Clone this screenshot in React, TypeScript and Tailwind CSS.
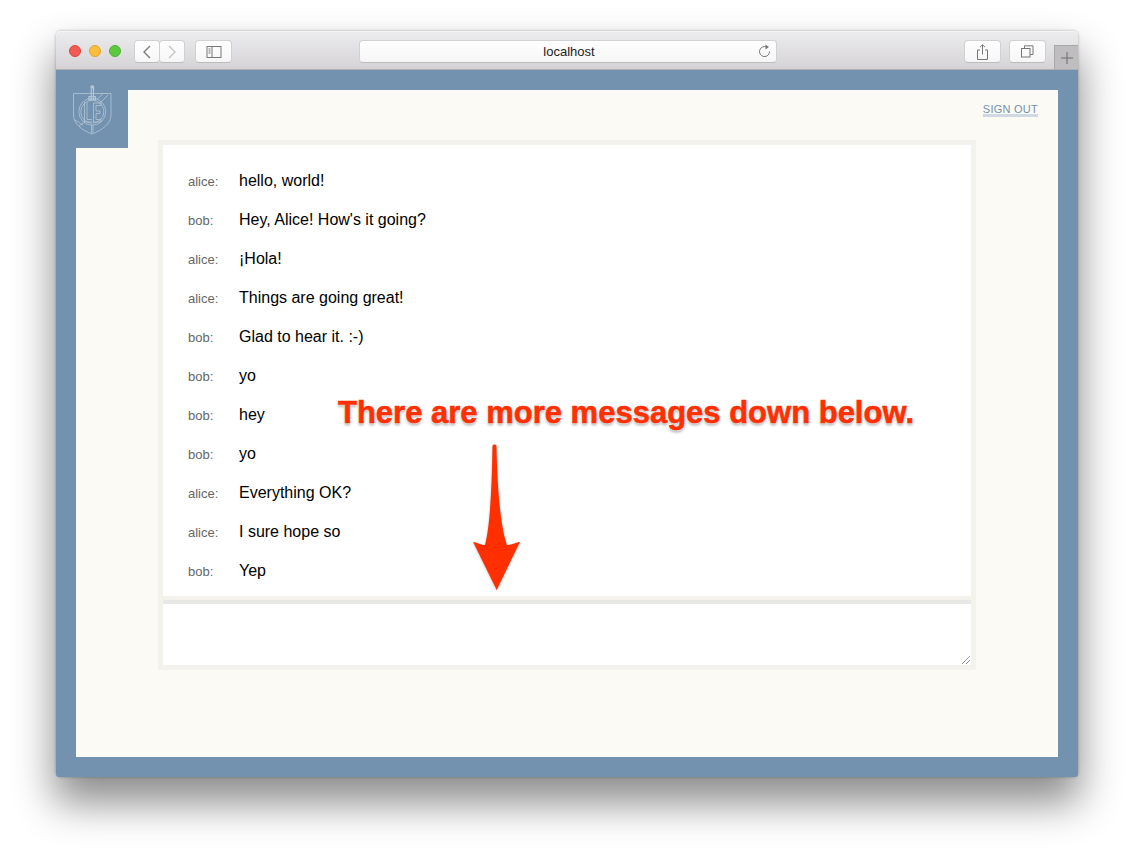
import React from 'react';

const font = { sans: 'font-["Liberation_Sans",Arial,sans-serif]' };

const messages: [string, string][] = [
  ['alice', 'hello, world!'],
  ['bob', "Hey, Alice! How's it going?"],
  ['alice', '¡Hola!'],
  ['alice', 'Things are going great!'],
  ['bob', 'Glad to hear it. :-)'],
  ['bob', 'yo'],
  ['bob', 'hey'],
  ['bob', 'yo'],
  ['alice', 'Everything OK?'],
  ['alice', 'I sure hope so'],
  ['bob', 'Yep'],
];

const toolBtn =
  'h-[23px] bg-gradient-to-b from-white to-[#f6f6f6] border border-[#d2d1d2] border-b-[#bdbcbd] rounded-[4px] flex items-center justify-center';

const Logo = () => (
  <svg width="40" height="50" viewBox="0 0 40 50" fill="none" stroke="#b4c5d6" strokeWidth="0.8">
    <path d="M1.5 8.5H39V30C39 39 30 45 20 49C10 45 1.5 39 1.5 30Z" />
    <circle cx="20.3" cy="26.7" r="13.5" />
    <circle cx="20.3" cy="26.7" r="11.5" />
    <path d="M19.3 1V15M21.5 1V15M17 11.5H23.5V15H17Z" strokeWidth="1.2" />
    <circle cx="20.3" cy="2" r="1.4" fill="#b4c5d6" />
    <path d="M28 18L36 10M25 14.5L31 8.5M3 35L11 40M7 41L13 37M19.5 40V48M21 40V48" />
    <path d="M12.5 17V37H20M15 17V34.5H20" />
    <path d="M21.5 18H29V20.5H24V26H28V28.5H24V34.5H29V37H21.5Z" />
  </svg>
);

const ArrowAnnotation = () => (
  <svg width="50" height="150" viewBox="0 0 50 150" className="drop-shadow-[0_1px_1px_rgba(0,0,0,0.25)]">
    <path
      d="M20.5 3C21 1 24 1 24.5 3C25 30 27 80 35 102C38 102 43 100 48 98.7L24.7 147L1 98.7C6 100 10 102 13 102C19 80 20 30 20.5 3Z"
      fill="#ff2f00"
    />
  </svg>
);

export default function App() {
  return (
    <div className={`w-[1134px] h-[857px] bg-white overflow-hidden pl-[56px] pt-[31px] ${font.sans}`}>
      <div className="relative w-[1022px] h-[746px] flex flex-col rounded-[5px] shadow-[0_24px_40px_2px_rgba(0,0,0,0.45),0_0_3px_rgba(0,0,0,0.3)]">
        {/* safari toolbar */}
        <div className="h-[39px] shrink-0 flex rounded-t-[5px] bg-gradient-to-b from-[#ecebed] to-[#d5d3d6] border-t border-[#f5f5f5] border-b border-b-[#b1b0b1] pl-[13px]">
          <div className="flex items-center gap-2 h-[38px]">
            <span className="w-3 h-3 rounded-full bg-[#f25a55] border border-[#e0443e]" />
            <span className="w-3 h-3 rounded-full bg-[#fbbd3a] border border-[#e1a52e]" />
            <span className="w-3 h-3 rounded-full bg-[#5ec83f] border border-[#4fb233]" />
          </div>
          <div className="flex items-center h-[39px] ml-[13px]">
            <div className={`${toolBtn} w-[26px]`}>
              <svg width="10" height="14" viewBox="0 0 10 14" fill="none" stroke="#7b7b7b" strokeWidth="1.4">
                <path d="M8 1L2 7L8 13" />
              </svg>
            </div>
            <div className={`${toolBtn} w-[26px] -ml-px`}>
              <svg width="10" height="14" viewBox="0 0 10 14" fill="none" stroke="#c4c4c4" strokeWidth="1.4">
                <path d="M2 1L8 7L2 13" />
              </svg>
            </div>
            <div className={`${toolBtn} w-[37px] ml-[10px]`}>
              <svg width="16" height="12" viewBox="0 0 16 12" fill="none" stroke="#777">
                <rect x="1" y="0.5" width="14" height="11" />
                <path d="M6 0.5V11.5M2.5 3H4.5M2.5 5H4.5M2.5 7H4.5" />
              </svg>
            </div>
          </div>
          <div className="flex items-center h-[39px] ml-[127px]">
            <div className={`${toolBtn} w-[418px] relative text-[13px] text-[#222]`}>
              <span className="pl-[2px]">localhost</span>
              <svg className="absolute right-[4px] top-[3px]" width="15" height="15" viewBox="0 0 15 15" fill="none" stroke="#777">
                <path d="M9.5 3A5 5 0 1 0 12.5 7.5" />
                <path d="M8.5 0.5L12 3L8.5 5.5Z" fill="#777" stroke="none" />
              </svg>
            </div>
          </div>
          <div className="flex items-center gap-2 h-[39px] ml-[187px]">
            <div className={`${toolBtn} w-[37px]`}>
              <svg width="13" height="16" viewBox="0 0 13 16" fill="none" stroke="#777">
                <path d="M4 6H1.5V15.5H11.5V6H9M6.5 10.5V1M4 3.2L6.5 0.8L9 3.2" />
              </svg>
            </div>
            <div className={`${toolBtn} w-[37px]`}>
              <svg width="13" height="13" viewBox="0 0 13 13" fill="none" stroke="#777">
                <rect x="0.5" y="3.5" width="8.5" height="8.5" />
                <path d="M3.5 3.5V0.8H12V9.5H9" />
              </svg>
            </div>
          </div>
          <div className="ml-2 mt-auto w-[24px] h-[24px] bg-[#bfbdbf] border-l border-t border-[#a9a8a9] flex items-center justify-center">
            <svg width="12" height="12" viewBox="0 0 12 12" stroke="#6d6d6d">
              <path d="M6 0V12M0 6H12" />
            </svg>
          </div>
        </div>

        {/* page */}
        <div className="flex-1 bg-[#7392b0] rounded-b-[3px] px-5 pt-5 pb-5 flex min-h-0">
          <div className="flex-1 relative bg-[#fbfaf5] flex flex-col">
            <div className="absolute left-0 top-0 w-[52px] h-[58px] bg-[#7392b0]">
              <div className="-mt-[5px] -ml-[4px]">
                <Logo />
              </div>
            </div>
            <div className="flex justify-end pr-5 pt-[14px] h-[50px]">
              <span className="text-[11px] leading-[10px] h-[13px] tracking-[0.25px] text-[#7392b0] border-b-[3px] border-[#d0d8e3]">
                SIGN OUT
              </span>
            </div>
            <div className="ml-[82px] w-[818px] h-[530px] bg-[#f3f2ec] p-[5px] flex flex-col">
              <div className="h-[451px] bg-white pt-[17px] px-[25px] text-black">
                {messages.map(([name, text], i) => (
                  <div key={i} className="h-[39px] flex items-center">
                    <span className="w-[51px] text-[13px] text-[#666] pt-px">{name}:</span>
                    <span className="text-[16px] leading-[20px] pb-[2px]">{text}</span>
                  </div>
                ))}
              </div>
              <div className="h-1 shrink-0" />
              <div className="relative flex-1 bg-white border-t-4 border-[#e8e8e6]">
                <svg className="absolute right-[1px] bottom-[1px]" width="8" height="8" viewBox="0 0 8 8" stroke="#555" strokeDasharray="1 0.6">
                  <path d="M0 8L8 0M4 8L8 4" />
                </svg>
              </div>
            </div>
          </div>
        </div>

        {/* annotation drawn over the screenshot */}
        <div className="absolute left-[282px] top-[363px] whitespace-nowrap text-[31px] leading-[37px] font-bold text-[#ff2f00] [-webkit-text-stroke:0.6px_#ff2f00] [text-shadow:0_0_1px_#fff,0_0_2px_#fff,0_0_3px_#fff,0_2px_3px_rgba(0,0,0,0.4)]">
          There are more messages down below.
        </div>
        <div className="absolute left-[416px] top-[412px]">
          <ArrowAnnotation />
        </div>
      </div>
    </div>
  );
}
